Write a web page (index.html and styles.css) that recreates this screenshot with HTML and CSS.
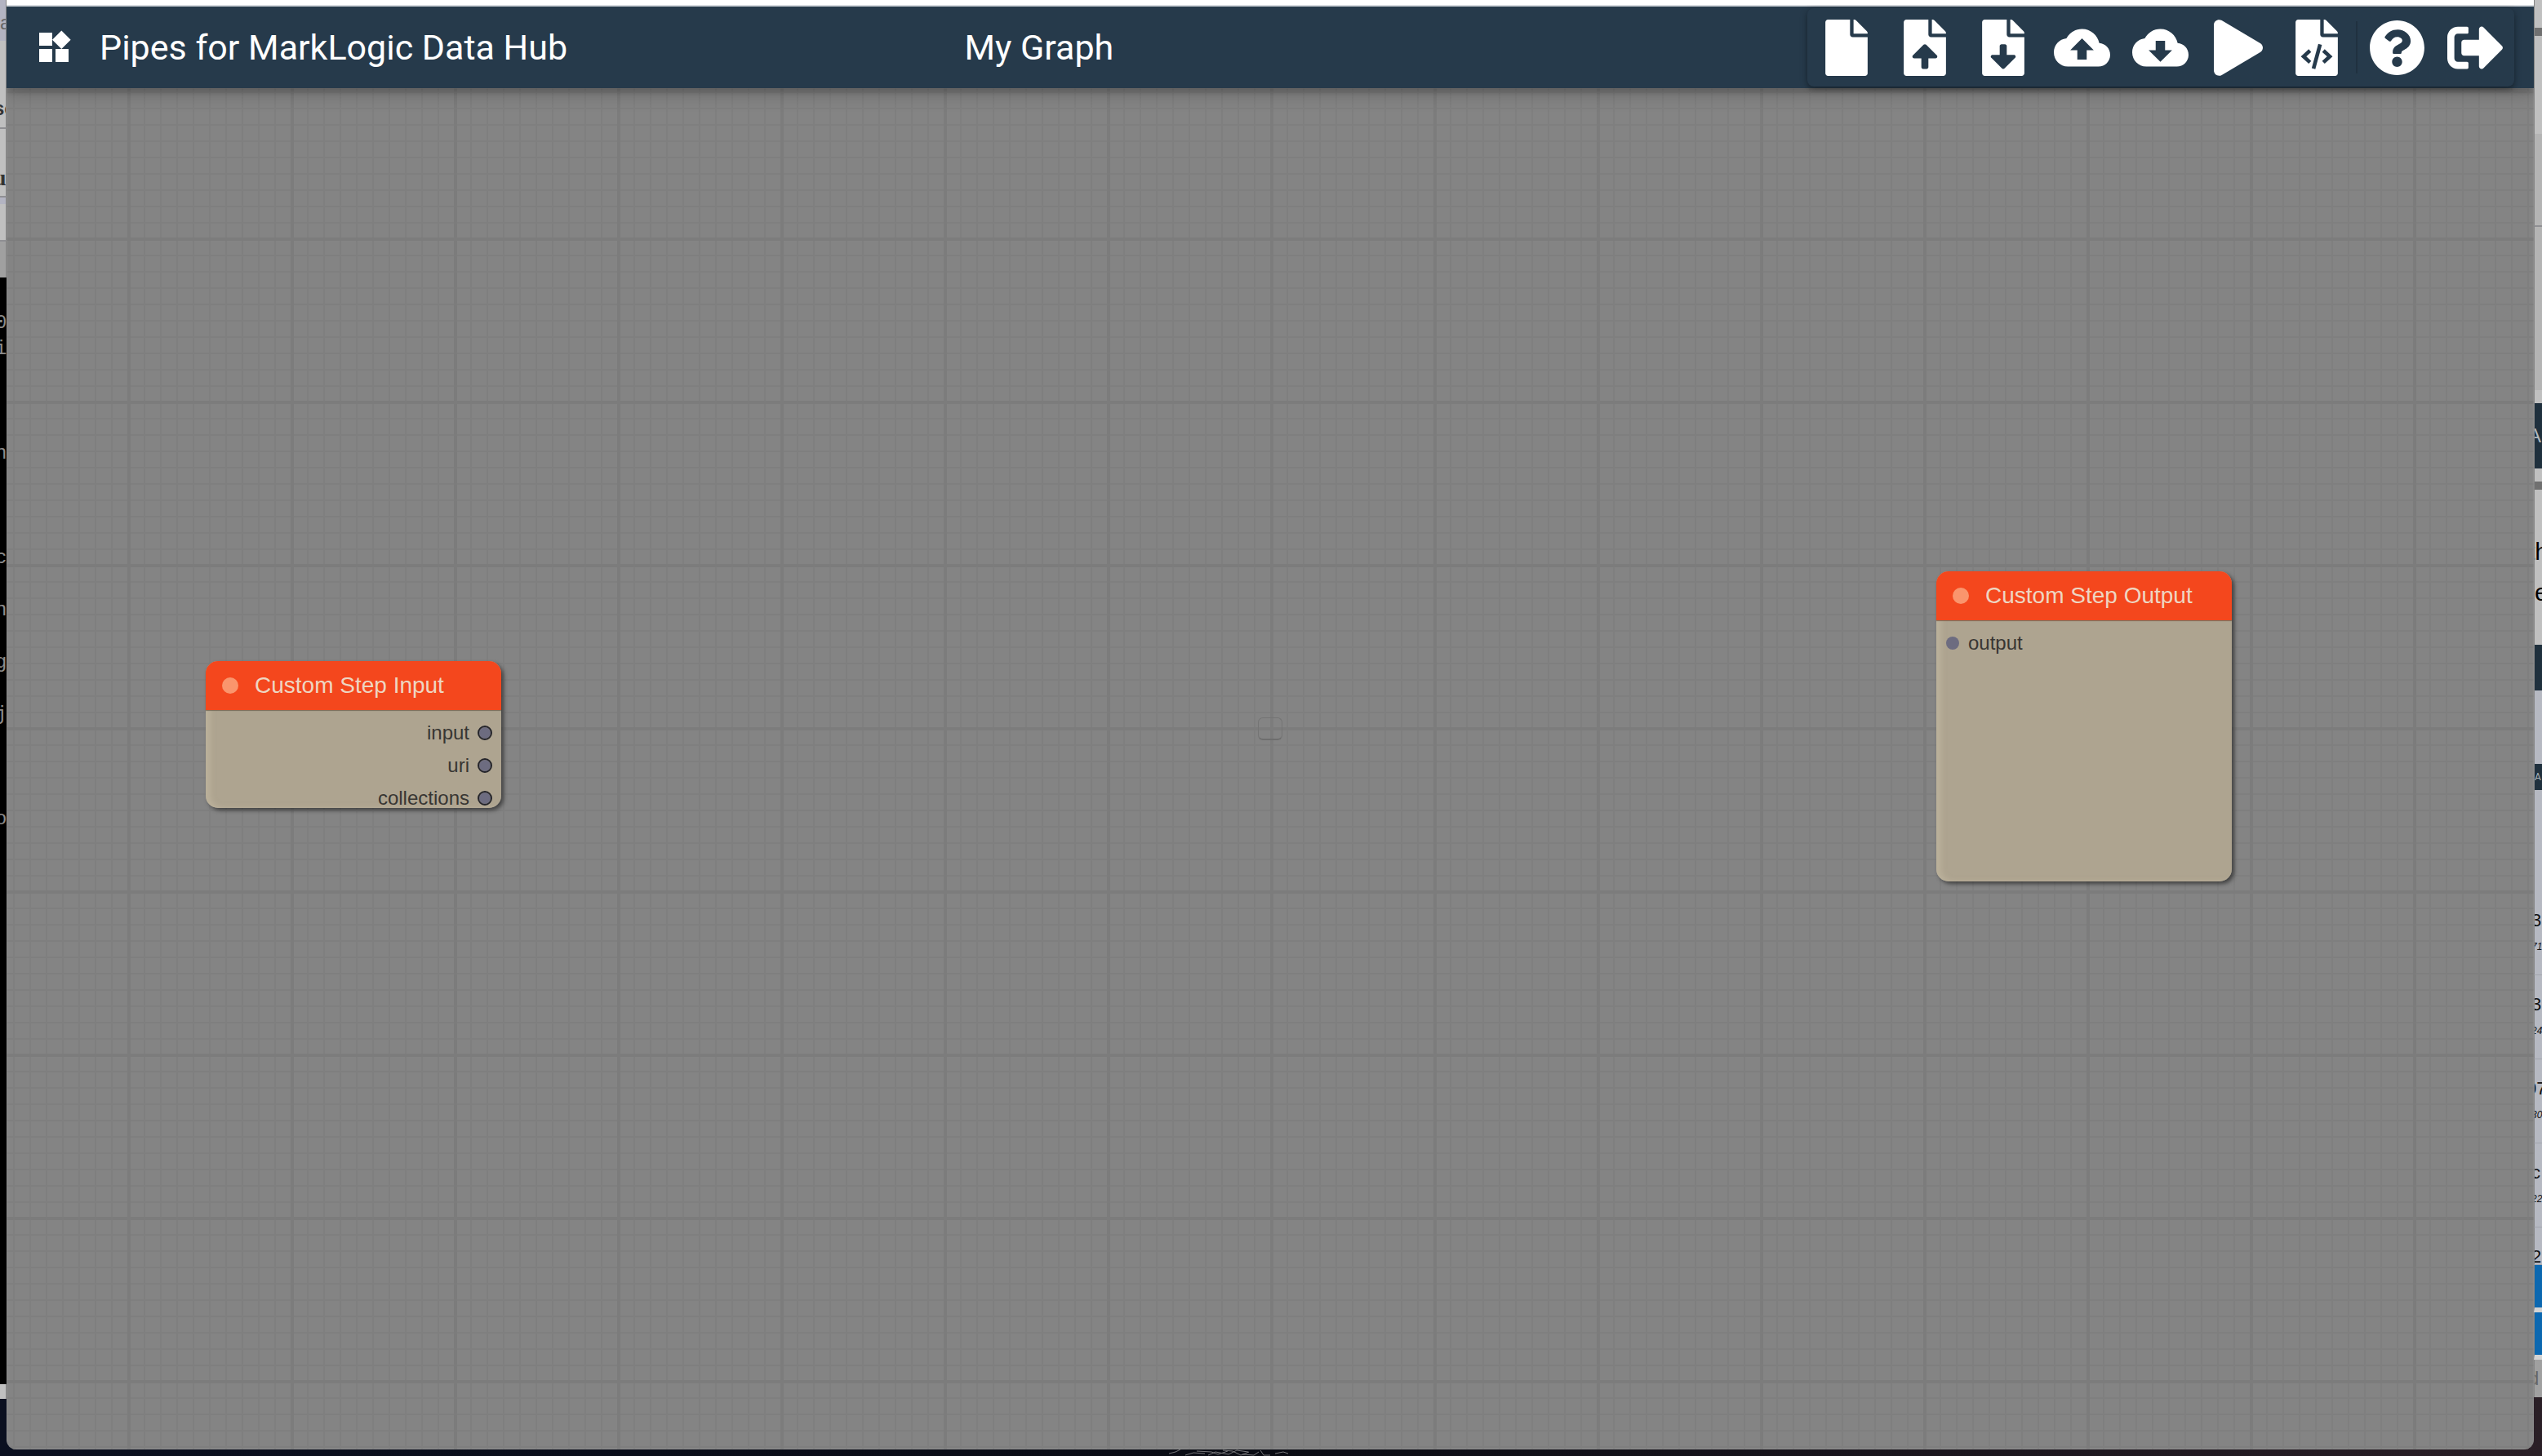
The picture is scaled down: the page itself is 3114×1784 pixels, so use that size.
FILE: index.html
```html
<!DOCTYPE html>
<html lang="en">
<head>
<meta charset="utf-8">
<title>Pipes for MarkLogic Data Hub</title>
<link rel="stylesheet" href="styles.css">
</head>
<body>
<div class="desktop">
  <aside class="behind behind-left" aria-hidden="true">
    <div class="pane lavender h50"><span class="row56 sans dim flush">a</span></div>
    <div class="pane paper h106"><span class="row166 sans heavy bold">se</span></div>
    <div class="pane paper ruled h84"><span class="row120 serif heavy bold">u</span></div>
    <div class="pane lavender ruled h10"></div>
    <div class="pane paper h44"></div>
    <div class="pane shade ruled h46"></div>
    <pre class="terminal">0
i



n



c

n

g

j



o</pre>
    <div class="pane paper h18"></div>
  </aside>

  <main class="window">
    <header class="toolbar">
      <div class="brand">
        <button class="menu" type="button" aria-label="Blocks">
          <svg viewBox="0 0 24 24"><path d="M13 13v8h8v-8h-8zM3 21h8v-8H3v8zM3 3v8h8V3H3zm13.66-1.31L11 7.34 16.66 13l5.66-5.66-5.66-5.65z"/></svg>
        </button>
        <h1 class="title">Pipes for MarkLogic Data Hub</h1>
      </div>
      <h2 class="title">My Graph</h2>
      <nav class="actions" aria-label="Graph actions">
        <button type="button" aria-label="New graph"><svg class="file" viewBox="0 0 384 512"><path d="M224 136V0H24C10.7 0 0 10.7 0 24v464c0 13.3 10.7 24 24 24h336c13.3 0 24-10.7 24-24V160H248c-13.2 0-24-10.8-24-24zm160-14.1v6.1H256V0h6.1c6.4 0 12.5 2.5 17 7l97.9 98c4.5 4.5 7 10.6 7 16.9z"/></svg></button>
        <button type="button" aria-label="Load graph from file"><svg class="file" viewBox="0 0 384 512"><path d="M224 136V0H24C10.7 0 0 10.7 0 24v464c0 13.3 10.7 24 24 24h336c13.3 0 24-10.7 24-24V160H248c-13.2 0-24-10.8-24-24zm65.18 216.01H224v80c0 8.84-7.16 16-16 16h-32c-8.84 0-16-7.16-16-16v-80H94.82c-14.28 0-21.41-17.29-11.27-27.36l96.42-95.7c6.65-6.61 17.39-6.61 24.04 0l96.42 95.7c10.15 10.07 3.03 27.36-11.25 27.36zM377 105L279.1 7c-4.5-4.5-10.6-7-17-7H256v128h128v-6.1c0-6.3-2.5-12.4-7-16.9z"/></svg></button>
        <button type="button" aria-label="Save graph to file"><svg class="file" viewBox="0 0 384 512"><path d="M224 136V0H24C10.7 0 0 10.7 0 24v464c0 13.3 10.7 24 24 24h336c13.3 0 24-10.7 24-24V160H248c-13.2 0-24-10.8-24-24zm76.45 211.36l-96.42 95.7c-6.65 6.61-17.39 6.61-24.04 0l-96.42-95.7C73.42 337.29 80.54 320 94.82 320H160v-80c0-8.84 7.16-16 16-16h32c8.84 0 16 7.16 16 16v80h65.18c14.28 0 21.4 17.29 11.27 27.36zM377 105L279.1 7c-4.5-4.5-10.6-7-17-7H256v128h128v-6.1c0-6.3-2.5-12.4-7-16.9z"/></svg></button>
        <button type="button" aria-label="Upload"><svg class="square" viewBox="0 0 24 24"><path d="M19.35 10.04C18.67 6.59 15.64 4 12 4 9.11 4 6.6 5.64 5.35 8.04 2.34 8.36 0 10.91 0 14c0 3.31 2.69 6 6 6h13c2.76 0 5-2.24 5-5 0-2.64-2.05-4.78-4.65-4.96zM14 13v4h-4v-4H7l5-5 5 5h-3z"/></svg></button>
        <button type="button" aria-label="Download"><svg class="square" viewBox="0 0 24 24"><path d="M19.35 10.04C18.67 6.59 15.64 4 12 4 9.11 4 6.6 5.64 5.35 8.04 2.34 8.36 0 10.91 0 14c0 3.31 2.69 6 6 6h13c2.76 0 5-2.24 5-5 0-2.64-2.05-4.78-4.65-4.96zM17 13l-5 5-5-5h3V9h4v4h3z"/></svg></button>
        <button type="button" aria-label="Run"><svg class="play" viewBox="0 0 448 512"><path d="M424.4 214.7L72.4 6.6C43.8-10.3 0 6.1 0 47.9V464c0 37.5 40.7 60.1 72.4 41.3l352-208c31.4-18.5 31.5-64.1 0-82.6z"/></svg></button>
        <button type="button" aria-label="Show code"><svg class="file" viewBox="0 0 384 512"><path d="M224 136V0H24C10.7 0 0 10.7 0 24v464c0 13.3 10.7 24 24 24h336c13.3 0 24-10.7 24-24V160H248c-13.2 0-24-10.8-24-24zm160-14.1v6.1H256V0h6.1c6.4 0 12.5 2.5 17 7l97.9 98c4.5 4.5 7 10.6 7 16.9z"/><g class="cutout"><path d="M131 282L73 335l58 54M253 282l58 53-58 54"/><path d="M223 226l-60 220"/></g></svg></button>
        <button class="parted" type="button" aria-label="Help"><svg class="square" viewBox="0 0 512 512"><path d="M504 256c0 136.997-111.043 248-248 248S8 392.997 8 256C8 119.083 119.043 8 256 8s248 111.083 248 248zM262.655 90c-54.497 0-89.255 22.957-116.549 63.758-3.536 5.286-2.353 12.415 2.715 16.258l34.699 26.31c5.205 3.947 12.621 3.008 16.665-2.122 17.864-22.658 30.113-35.797 57.303-35.797 20.429 0 45.698 13.148 45.698 32.958 0 14.976-12.363 22.667-32.534 33.976C247.128 238.528 216 254.941 216 296v4c0 6.627 5.373 12 12 12h56c6.627 0 12-5.373 12-12v-1.333c0-28.462 83.186-29.647 83.186-106.667 0-58.002-60.165-102-116.531-102zM256 338c-25.365 0-46 20.635-46 46 0 25.364 20.635 46 46 46s46-20.636 46-46c0-25.365-20.635-46-46-46z"/></svg></button>
        <button type="button" aria-label="Sign out"><svg class="square" viewBox="0 0 512 512"><path d="M497 273L329 441c-15 15-41 4.500-41-17v-96H152c-13.300 0-24-10.700-24-24v-96c0-13.300 10.700-24 24-24h136V88c0-21.400 25.900-32 41-17l168 168c9.300 9.400 9.300 24.600 0 34zM192 436v-40c0-6.600-5.400-12-12-12H96c-17.700 0-32-14.300-32-32V160c0-17.700 14.300-32 32-32h84c6.600 0 12-5.400 12-12V76c0-6.600-5.400-12-12-12H96c-53 0-96 43-96 96v192c0 53 43 96 96 96h84c6.600 0 12-5.400 12-12z"/></svg></button>
      </nav>
    </header>

    <section class="canvas" aria-label="Graph canvas">
      <article class="node node-input">
        <h3 class="node-title">Custom Step Input</h3>
        <ul class="slots outputs">
          <li>input</li>
          <li>uri</li>
          <li>collections</li>
        </ul>
      </article>
      <div class="marker"></div>
      <article class="node node-output">
        <h3 class="node-title">Custom Step Output</h3>
        <ul class="slots inputs">
          <li>output</li>
        </ul>
      </article>
    </section>
  </main>

  <aside class="behind behind-right" aria-hidden="true">
    <div class="pane paper h34"></div>
    <div class="pane rule"></div>
    <div class="pane paper h120"></div>
    <div class="pane mid h112"></div>
    <div class="pane mid ruled h202"></div>
    <div class="pane paper h16"></div>
    <div class="pane navy h80"><span class="row80 sans">A</span></div>
    <div class="pane paper h16"></div>
    <div class="pane rule"></div>
    <div class="pane paper h190"><span class="row152 large">th</span><span class="row-next large flush">e</span></div>
    <div class="pane navy h56"></div>
    <div class="pane steel h90"></div>
    <div class="pane navy h32"><span class="row32 tiny flush">A</span></div>
    <div class="pane steel h124"></div>
    <div class="pane steel record"><b>31</b><i>71</i></div>
    <div class="pane steel record"><b>31</b><i>24</i></div>
    <div class="pane steel record"><b class="late">07</b><i>30</i></div>
    <div class="pane steel record"><b>c</b><i>22</i></div>
    <div class="pane steel h46 record"><b>2</b></div>
    <div class="pane blue"></div>
    <div class="pane blue"></div>
    <div class="pane shade h46"><span class="row46 sans dim">d</span></div>
  </aside>

  <footer class="wallpaper" aria-hidden="true">
    <svg viewBox="0 0 160 8"><path d="M0 5l8-2 6-3M20 7l10-3 14 1M34 2l18 1 8 3 12-4M48 7l9-4 16 3 10-5 14 2M66 1l12 1 10 5 10-4M90 6l14 1 6-4M112 1l4 6 8 0M130 5l10-2 6 2"/></svg>
  </footer>
</div>
</body>
</html>
```

FILE: styles.css
```css
*,
*::before {
  box-sizing: border-box;
}

body {
  margin: 0;
  background: #0a0d18;
  font-family: Roboto, "Liberation Sans", sans-serif;
}

h1, h2, h3, ul, pre {
  margin: 0;
  padding: 0;
  font-weight: 400;
}

.desktop {
  display: grid;
  grid-template-columns: 8px 1fr 10px;
  grid-template-rows: 1fr 8px;
  min-height: 100vh;
  background: linear-gradient(90deg, #0b1020, #0a0c14 50%, #2a1f26);
}

/* Application window */
.window {
  grid-column: 2;
  grid-row: 1;
  display: flex;
  flex-direction: column;
  border-top: 6px solid #ffffff;
  border-radius: 0 0 12px 12px;
  overflow: hidden;
}

.toolbar {
  position: relative;
  z-index: 1;
  display: grid;
  grid-template-columns: 38.2% 1fr auto;
  align-items: center;
  height: 102px;
  padding-right: 24px;
  border-top: 2px solid #d5d9de;
  background: #263a4b;
  color: #ffffff;
  box-shadow: 0 4px 8px rgba(0, 0, 0, .2), 0 8px 20px rgba(0, 0, 0, .18);
}

.brand {
  display: flex;
  align-items: center;
  gap: 32px;
  padding-left: 34px;
}

.title {
  font-size: 43px;
  line-height: 64px;
  white-space: nowrap;
}

button {
  display: flex;
  align-items: center;
  justify-content: center;
  padding: 0;
  border: 0;
  background: none;
  color: inherit;
  cursor: pointer;
}

svg {
  display: block;
  fill: currentColor;
}

.menu svg {
  width: 48px;
  height: 48px;
}

.actions {
  display: flex;
  height: 96px;
  border-radius: 8px;
  box-shadow: 0 2px 10px rgba(0, 0, 0, .3), 0 4px 4px rgba(0, 0, 0, .14);
}

.actions button {
  width: 96px;
}

.actions .parted {
  width: 98px;
  padding-left: 2px;
  background: linear-gradient(#203140, #203140) 0 50% / 2px 64px no-repeat;
}

.file {
  width: 52px;
  height: 69px;
}

.square {
  width: 69px;
  height: 69px;
}

.play {
  width: 60px;
  height: 69px;
}

.cutout {
  fill: none;
  stroke: #263a4b;
  stroke-width: 34;
}

/* Graph canvas */
.canvas {
  position: relative;
  flex: 1;
  background-color: #848484;
  background-image:
    linear-gradient(90deg, #7c7c7c 4px, transparent 4px),
    linear-gradient(#7c7c7c 4px, transparent 4px),
    linear-gradient(90deg, #7f7f7f 2px, transparent 2px),
    linear-gradient(#7f7f7f 2px, transparent 2px);
  background-size: 200px 200px, 200px 200px, 20px 20px, 20px 20px;
  background-position: 148px 0, 0 183px, 8px 0, 0 4px;
  box-shadow: inset 0 0 2px #a0a0a0;
}

.node {
  position: absolute;
  width: 362px;
  border-radius: 15px;
  background: rgba(178, 167, 145, .93);
  box-shadow: 3px 3px 5px rgba(0, 0, 0, .5), inset 6px 0 6px rgba(200, 190, 165, .5);
  font-family: "Liberation Sans", Arial, sans-serif;
}

.node-input {
  left: 244px;
  top: 702px;
  height: 180px;
}

.node-output {
  left: 2364px;
  top: 592px;
  height: 380px;
}

.node-title {
  display: flex;
  align-items: center;
  gap: 20px;
  height: 60px;
  padding-left: 20px;
  border-radius: 15px 15px 0 0;
  background: #f4471d;
  box-shadow: 0 1px 1px rgba(90, 70, 50, .6);
  color: #eed6c2;
  font-size: 28px;
}

.node-title::before {
  content: "";
  width: 20px;
  height: 20px;
  border-radius: 50%;
  background: #fa956d;
}

.slots {
  padding: 8px 11px 0;
  list-style: none;
  color: #383633;
  font-size: 24px;
  line-height: 40px;
}

.slots li {
  display: flex;
  align-items: center;
  gap: 10px;
}

.slots li::before {
  content: "";
  width: 18px;
  height: 18px;
  border: 1px solid transparent;
  border-radius: 50%;
  background: #6d6c80 padding-box;
}

.outputs li {
  flex-direction: row-reverse;
}

.outputs li::before {
  border: 2px solid #25252b;
}

.marker {
  position: absolute;
  left: 1533px;
  top: 771px;
  width: 30px;
  height: 28px;
  border: 1px solid #747474;
  border-bottom: 2px solid #6e6e6e;
  border-radius: 6px;
}

/* Slices of the windows that lie behind */
.behind {
  grid-row: 1 / 3;
  display: flex;
  flex-direction: column;
  overflow: hidden;
}

.behind-left {
  grid-column: 1;
}

.behind-right {
  grid-column: 3;
}

.pane {
  flex: none;
  overflow: hidden;
  border-right: 1px solid #858585;
}

.behind-right .pane {
  border-right: 0;
  border-left: 1px solid #858585;
}

.pane span {
  display: block;
  margin-left: -8px;
  white-space: nowrap;
}

.pane .flush {
  margin-left: 0;
}

.paper { background: #c0c0c0; }
.mid { background: #b4b4b4; }
.shade { background: #a0a0a0; }
.lavender { background: #b3b4c2; }
.steel { background: #b6b9c2; }
.navy { background: #1f303d; color: #b0b8be; }
.ruled { border-top: 2px solid #8f8f93; }
.rule { height: 10px; background: #707070; }

.blue {
  height: 58px;
  border-bottom: 6px solid #d4d4d4;
  background: #0c68b0;
}

.h10 { height: 10px; }
.h16 { height: 16px; }
.h18 { height: 18px; }
.h32 { height: 32px; }
.h34 { height: 34px; }
.h44 { height: 44px; }
.h46 { height: 46px; }
.h50 { height: 50px; }
.h56 { height: 56px; }
.h80 { height: 80px; }
.h84 { height: 84px; }
.h90 { height: 90px; }
.h106 { height: 106px; }
.h112 { height: 112px; }
.h120 { height: 120px; }
.h124 { height: 124px; }
.h190 { height: 190px; }
.h202 { height: 202px; }

.sans {
  font-family: "Liberation Sans", sans-serif;
  font-size: 24px;
}

.large {
  color: #000000;
  font-family: "Liberation Sans", sans-serif;
  font-size: 30px;
}

.serif {
  font-family: "Liberation Serif", serif;
  font-size: 28px;
}

.tiny { font-size: 12px; }
.bold { font-weight: 700; }
.dim { color: #666666; }
.heavy { color: #333333; }

.row32 { line-height: 32px; }
.row46 { line-height: 46px; }
.row56 { line-height: 56px; }
.row80 { line-height: 80px; }
.row120 { line-height: 120px; }
.row152 { line-height: 152px; }
.row166 { line-height: 166px; }

.row-next {
  margin-top: -52px;
  line-height: 52px;
}

.terminal {
  height: 1356px;
  padding-top: 40px;
  margin-left: -6px;
  background: #000000;
  color: #8c8c8c;
  font-family: "Liberation Mono", monospace;
  font-size: 24px;
  line-height: 32px;
}

.record {
  height: 103px;
  border-bottom: 1px solid #a2a5ad;
  color: #111111;
  font-family: "Liberation Sans", sans-serif;
}

.record b,
.record i {
  display: block;
  margin-left: -4px;
  white-space: nowrap;
}

.record .late {
  margin-left: -10px;
}

.record b {
  padding-top: 22px;
  font-size: 22px;
  font-weight: 400;
  line-height: 28px;
}

.record i {
  font-size: 12px;
  line-height: 36px;
}

.record.h46 {
  height: 46px;
}

.wallpaper {
  grid-column: 2;
  grid-row: 2;
  padding-left: 46%;
}

.wallpaper svg {
  width: 160px;
  height: 8px;
  fill: none;
  stroke: #77777a;
  stroke-width: 1;
}
```
